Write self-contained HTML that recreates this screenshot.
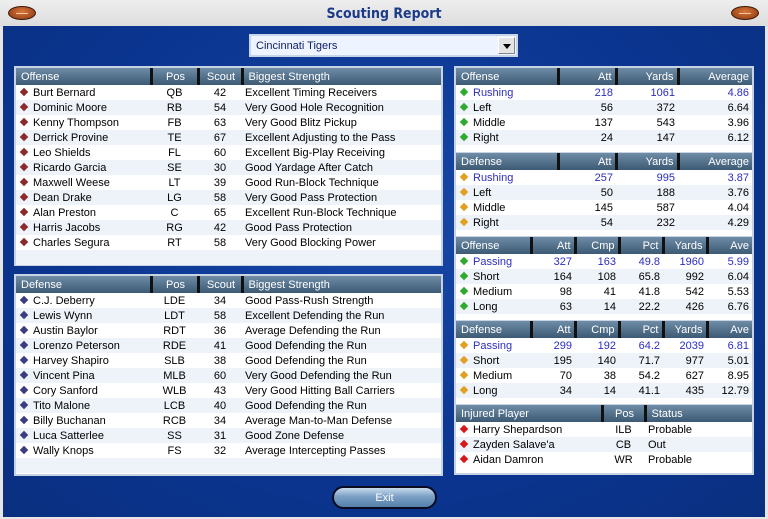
<!DOCTYPE html>
<html><head><meta charset="utf-8"><style>
*{margin:0;padding:0;box-sizing:border-box}
body{width:768px;height:519px;overflow:hidden;background:#e6e6e6;font-family:"Liberation Sans",sans-serif;font-size:11px;position:relative}
.top{position:absolute;left:0;top:0;width:768px;height:27px;background:linear-gradient(#eeeeee,#dcdcdc)}
.ball{position:absolute;top:6px;width:28px;height:14px;border-radius:50%;background:radial-gradient(ellipse at 50% 40%,#d7773a,#8a3510);border:1px solid #3a1a08}
.ball:after{content:"";position:absolute;left:7px;right:7px;top:6px;height:1px;background:#f0c8a0}
.title{position:absolute;left:0;width:768px;top:6px;text-align:center;font:bold 14px "DejaVu Sans Condensed","Liberation Sans",sans-serif;color:#1b3a8a}
.main{position:absolute;left:3px;top:26px;width:762px;height:491px;background:radial-gradient(ellipse at 50% 40%,#1848a8,#0a3590 60%,#0a2f80)}
.dd{position:absolute;left:249px;top:34px;width:269px;height:23px;background:#eef4ff;border:2px solid #c8d4e8;font-size:11px;color:#10206a;padding:4px 0 0 5px}
.dd b{position:absolute;right:1px;top:1px;width:17px;height:17px;background:#e4e4e4;border:1px solid #888;border-top-color:#fff;border-left-color:#fff}
.dd b:after{content:"";position:absolute;left:4px;top:6px;border:4px solid transparent;border-top:5px solid #000}
.box{position:absolute;background:#fff;border:2px solid #c7d2e2}
table{border-collapse:collapse;table-layout:fixed;width:100%}
td,th{height:15px;padding:0 3px;white-space:nowrap;overflow:hidden;font-weight:normal}
th{height:17px;background:linear-gradient(#6f8ca6,#3d5a75);color:#fff;text-align:left;border-left:3px solid #111;padding-left:5px}
th:first-child{border-left:none}
tr:nth-child(odd) td{background:#eef3fa}
.r td,th.r,td.r{text-align:right}
td.c,th.c{text-align:center}
.bl td{color:#2d2dc0}
i{display:inline-block;width:6px;height:6px;transform:rotate(45deg);margin:0 6px 1px 2px}
.m i{background:#8a2a2a}.n i{background:#3c3c80}.g i{background:#2faa2f}.o i{background:#e0a020}.x i{background:#d81818}
.sp{height:7px;background:#fff;border-bottom:1px solid #c7d2e2;border-top:2px solid #fff}
.exit{position:absolute;left:332px;top:486px;width:105px;height:23px;border:2px solid #0a0a20;border-radius:12px;background:linear-gradient(#c8dbee,#7ba0c4 45%,#5580aa);color:#fff;text-align:center;font-size:11px;padding-top:4px}
</style></head><body>
<div class="top"></div>
<div class="ball" style="left:8px"></div><div class="ball" style="left:731px"></div>
<div class="title">Scouting Report</div>
<div class="main"></div>
<div class="dd">Cincinnati Tigers<b></b></div>

<div class="box m" style="left:14px;top:66px;width:429px;height:200px"><table>
<colgroup><col style="width:135px"><col style="width:47px"><col style="width:44px"><col></colgroup>
<tr><th>Offense</th><th class="c">Pos</th><th class="c">Scout</th><th>Biggest Strength</th></tr>
<tr><td><i></i>Burt Bernard</td><td class="c">QB</td><td class="c">42</td><td>Excellent Timing Receivers</td></tr>
<tr><td><i></i>Dominic Moore</td><td class="c">RB</td><td class="c">54</td><td>Very Good Hole Recognition</td></tr>
<tr><td><i></i>Kenny Thompson</td><td class="c">FB</td><td class="c">63</td><td>Very Good Blitz Pickup</td></tr>
<tr><td><i></i>Derrick Provine</td><td class="c">TE</td><td class="c">67</td><td>Excellent Adjusting to the Pass</td></tr>
<tr><td><i></i>Leo Shields</td><td class="c">FL</td><td class="c">60</td><td>Excellent Big-Play Receiving</td></tr>
<tr><td><i></i>Ricardo Garcia</td><td class="c">SE</td><td class="c">30</td><td>Good Yardage After Catch</td></tr>
<tr><td><i></i>Maxwell Weese</td><td class="c">LT</td><td class="c">39</td><td>Good Run-Block Technique</td></tr>
<tr><td><i></i>Dean Drake</td><td class="c">LG</td><td class="c">58</td><td>Very Good Pass Protection</td></tr>
<tr><td><i></i>Alan Preston</td><td class="c">C</td><td class="c">65</td><td>Excellent Run-Block Technique</td></tr>
<tr><td><i></i>Harris Jacobs</td><td class="c">RG</td><td class="c">42</td><td>Good Pass Protection</td></tr>
<tr><td><i></i>Charles Segura</td><td class="c">RT</td><td class="c">58</td><td>Very Good Blocking Power</td></tr>
<tr><td></td><td></td><td></td><td></td></tr>
</table></div>

<div class="box n" style="left:14px;top:274px;width:429px;height:202px"><table>
<colgroup><col style="width:135px"><col style="width:47px"><col style="width:44px"><col></colgroup>
<tr><th>Defense</th><th class="c">Pos</th><th class="c">Scout</th><th>Biggest Strength</th></tr>
<tr><td><i></i>C.J. Deberry</td><td class="c">LDE</td><td class="c">34</td><td>Good Pass-Rush Strength</td></tr>
<tr><td><i></i>Lewis Wynn</td><td class="c">LDT</td><td class="c">58</td><td>Excellent Defending the Run</td></tr>
<tr><td><i></i>Austin Baylor</td><td class="c">RDT</td><td class="c">36</td><td>Average Defending the Run</td></tr>
<tr><td><i></i>Lorenzo Peterson</td><td class="c">RDE</td><td class="c">41</td><td>Good Defending the Run</td></tr>
<tr><td><i></i>Harvey Shapiro</td><td class="c">SLB</td><td class="c">38</td><td>Good Defending the Run</td></tr>
<tr><td><i></i>Vincent Pina</td><td class="c">MLB</td><td class="c">60</td><td>Very Good Defending the Run</td></tr>
<tr><td><i></i>Cory Sanford</td><td class="c">WLB</td><td class="c">43</td><td>Very Good Hitting Ball Carriers</td></tr>
<tr><td><i></i>Tito Malone</td><td class="c">LCB</td><td class="c">40</td><td>Good Defending the Run</td></tr>
<tr><td><i></i>Billy Buchanan</td><td class="c">RCB</td><td class="c">34</td><td>Average Man-to-Man Defense</td></tr>
<tr><td><i></i>Luca Satterlee</td><td class="c">SS</td><td class="c">31</td><td>Good Zone Defense</td></tr>
<tr><td><i></i>Wally Knops</td><td class="c">FS</td><td class="c">32</td><td>Average Intercepting Passes</td></tr>
<tr><td></td><td></td><td></td><td></td></tr>
</table></div>

<div class="box" style="left:454px;top:66px;width:300px;height:409px">
<table class="g">
<colgroup><col style="width:102px"><col style="width:58px"><col style="width:62px"><col></colgroup>
<tr><th>Offense</th><th class="r">Att</th><th class="r">Yards</th><th class="r">Average</th></tr>
<tr class="bl r"><td style="text-align:left"><i></i>Rushing</td><td>218</td><td>1061</td><td>4.86</td></tr>
<tr class="r"><td style="text-align:left"><i></i>Left</td><td>56</td><td>372</td><td>6.64</td></tr>
<tr class="r"><td style="text-align:left"><i></i>Middle</td><td>137</td><td>543</td><td>3.96</td></tr>
<tr class="r"><td style="text-align:left"><i></i>Right</td><td>24</td><td>147</td><td>6.12</td></tr>
</table>
<div class="sp" style="height:8px"></div>
<table class="o">
<colgroup><col style="width:102px"><col style="width:58px"><col style="width:62px"><col></colgroup>
<tr><th>Defense</th><th class="r">Att</th><th class="r">Yards</th><th class="r">Average</th></tr>
<tr class="bl r"><td style="text-align:left"><i></i>Rushing</td><td>257</td><td>995</td><td>3.87</td></tr>
<tr class="r"><td style="text-align:left"><i></i>Left</td><td>50</td><td>188</td><td>3.76</td></tr>
<tr class="r"><td style="text-align:left"><i></i>Middle</td><td>145</td><td>587</td><td>4.04</td></tr>
<tr class="r"><td style="text-align:left"><i></i>Right</td><td>54</td><td>232</td><td>4.29</td></tr>
</table>
<div class="sp"></div>
<table class="g">
<colgroup><col style="width:75px"><col style="width:44px"><col style="width:44px"><col style="width:44px"><col style="width:44px"><col></colgroup>
<tr><th>Offense</th><th class="r">Att</th><th class="r">Cmp</th><th class="r">Pct</th><th class="r">Yards</th><th class="r">Ave</th></tr>
<tr class="bl r"><td style="text-align:left"><i></i>Passing</td><td>327</td><td>163</td><td>49.8</td><td>1960</td><td>5.99</td></tr>
<tr class="r"><td style="text-align:left"><i></i>Short</td><td>164</td><td>108</td><td>65.8</td><td>992</td><td>6.04</td></tr>
<tr class="r"><td style="text-align:left"><i></i>Medium</td><td>98</td><td>41</td><td>41.8</td><td>542</td><td>5.53</td></tr>
<tr class="r"><td style="text-align:left"><i></i>Long</td><td>63</td><td>14</td><td>22.2</td><td>426</td><td>6.76</td></tr>
</table>
<div class="sp"></div>
<table class="o">
<colgroup><col style="width:75px"><col style="width:44px"><col style="width:44px"><col style="width:44px"><col style="width:44px"><col></colgroup>
<tr><th>Defense</th><th class="r">Att</th><th class="r">Cmp</th><th class="r">Pct</th><th class="r">Yards</th><th class="r">Ave</th></tr>
<tr class="bl r"><td style="text-align:left"><i></i>Passing</td><td>299</td><td>192</td><td>64.2</td><td>2039</td><td>6.81</td></tr>
<tr class="r"><td style="text-align:left"><i></i>Short</td><td>195</td><td>140</td><td>71.7</td><td>977</td><td>5.01</td></tr>
<tr class="r"><td style="text-align:left"><i></i>Medium</td><td>70</td><td>38</td><td>54.2</td><td>627</td><td>8.95</td></tr>
<tr class="r"><td style="text-align:left"><i></i>Long</td><td>34</td><td>14</td><td>41.1</td><td>435</td><td>12.79</td></tr>
</table>
<div class="sp"></div>
<table class="x">
<colgroup><col style="width:146px"><col style="width:43px"><col></colgroup>
<tr><th>Injured Player</th><th class="c">Pos</th><th>Status</th></tr>
<tr><td><i></i>Harry Shepardson</td><td class="c">ILB</td><td>Probable</td></tr>
<tr><td><i></i>Zayden Salave'a</td><td class="c">CB</td><td>Out</td></tr>
<tr><td><i></i>Aidan Damron</td><td class="c">WR</td><td>Probable</td></tr>
</table>
</div>

<div class="exit">Exit</div>
</body></html>
